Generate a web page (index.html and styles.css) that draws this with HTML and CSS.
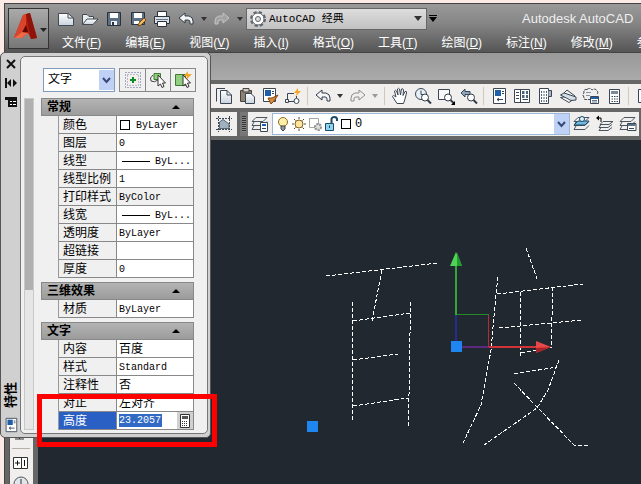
FILE: index.html
```html
<!DOCTYPE html>
<html lang="zh-CN">
<head>
    <meta charset="UTF-8">
    <meta name="viewport" content="width=device-width, initial-scale=1.0">
    <title>Autodesk AutoCAD</title>
    <link rel="stylesheet" href="styles.css">
</head>
<body>
    <svg class="defs" width="0" height="0">
        <defs>
            <linearGradient id="paper" x1="0" y1="0" x2="0" y2="1">
                <stop offset="0" stop-color="#ffffff"/>
                <stop offset="1" stop-color="#c9d3de"/>
            </linearGradient>
            <symbol id="undo" viewBox="0 0 18 18">
                <path d="M2 8 L8 3 V6 H12 Q16 7 16 11 V14 H13 V12 Q13 10 11 10 H8 V13 Z" stroke="#333c48"/>
            </symbol>
            <symbol id="redo" viewBox="0 0 18 18">
                <path d="M16 8 L10 3 V6 H6 Q2 7 2 11 V14 H5 V12 Q5 10 7 10 H10 V13 Z" stroke="currentColor"/>
            </symbol>
            <symbol id="properties" viewBox="0 0 18 18">
                <path d="M3.500 1.500 H15.500 V16.500 H3.500 Z" fill="#fff" stroke="#3b4654"/>
                <path d="M5 3 H11 V9 H5 Z" fill="#1e5fa8"/>
                <path d="M12 4.500 H14 M12 6.500 H14 M7 12.500 H13 M7 12.500 L9 11 M7 12.500 L9 14" stroke="#3b4654" fill="none"/>
            </symbol>
            <symbol id="layers" viewBox="0 0 18 18">
                <path d="M5 2.500 H16 L12 6.500 H1 Z M3 7 L1 10.500 H12 L16 6.500 M3 11 L1 14.500 H12 L16 10.500" stroke="#4a5562"/>
            </symbol>
            <symbol id="lens" viewBox="0 0 18 18">
                <circle cx="11" cy="10.500" r="3.500" fill="#fff" stroke="#333c48"/>
                <path d="M13.500 13 L17 16.500" stroke="#333c48" stroke-width="2"/>
            </symbol>
            <symbol id="cursor" viewBox="0 0 18 18">
                <path d="M9 4 V15 L11.500 13 L13 16.500 L15 15.500 L13.500 12 H16.500 Z" fill="#fff" stroke="#333"/>
            </symbol>
        </defs>
    </svg>

    <div class="app">
        <header class="titlebar">
            <button class="app-menu" aria-label="应用程序菜单">
                <svg width="38" height="38" viewBox="0 0 38 38">
                    <path d="M4 28 L13 5 L20 3 L27 28 L21 29 L18 23 L12 28 Z" fill="#b81f10"/>
                    <path d="M13 5 L16 4 L16 15 L12 22 L4 28 Z" fill="#d8452c"/>
                    <path d="M16 4 L20 3 L27 28 L21 29 L19 20 Z" fill="#8e130b"/>
                    <path d="M12 23 L16 15 L18 22 Z" fill="#5c0904"/>
                    <path d="M4 28 L12 22 L18 23 L12 28 Z" fill="#ef6b45"/>
                    <path d="M30 18 H37 L33.500 22 Z" fill="#222"/>
                </svg>
            </button>
            <div class="titlebar-rows">
                <div class="quick-access">
                    <button aria-label="新建"><svg viewBox="0 0 18 18"><path d="M1.500 3.500 H11 L16.500 8 V15.500 H1.500 Z" fill="url(#paper)" stroke="#434a52"/><path d="M11 3.500 V8 H16.500" stroke="#434a52"/></svg></button>
                    <button aria-label="打开"><svg viewBox="0 0 18 18"><path d="M1.500 14.500 V4.500 H6 L8 6.500 H12.500 V9" fill="#e8edf2" stroke="#434a52"/><path d="M1.500 14.500 L6 9 H17 L12 14.500 Z" fill="url(#paper)" stroke="#434a52"/></svg></button>
                    <button aria-label="保存"><svg viewBox="0 0 18 18"><path d="M2.500 2.500 H15.500 V15.500 H2.500 Z" fill="#5d6f82" stroke="#29323d"/><path d="M5 3 H13 V8 H5 Z" fill="#fff"/><path d="M6 11 H12 V15 H6 Z" fill="#eef1f5"/><path d="M7 12 H9 V15 H7 Z" fill="#29323d"/></svg></button>
                    <button aria-label="另存为"><svg viewBox="0 0 18 18"><path d="M2.500 2.500 H15.500 V14.500 H2.500 Z" fill="#5d6f82" stroke="#29323d"/><path d="M5 3 H13 V8 H5 Z M5 11 H10 V14 H5 Z" fill="#fff"/><path d="M9 16 L10 13 L15 8 L17 10 L12 15 Z" fill="#f2b95e" stroke="#7c4a13"/></svg></button>
                    <button aria-label="打印"><svg viewBox="0 0 18 18"><path d="M4.500 7 V1.500 H13.500 V7" fill="#fff" stroke="#29323d"/><path d="M1.500 6.500 H16.500 V13.500 H1.500 Z" fill="#dbe1e8" stroke="#29323d"/><path d="M4.500 11.500 H13.500 V16.500 H4.500 Z" fill="#fff" stroke="#29323d"/><path d="M3 9.500 H15" stroke="#6b7784"/></svg></button>
                    <button aria-label="放弃" class="fill-light"><svg><use href="#undo"/></svg></button>
                    <button class="caret" aria-label="放弃列表"></button>
                    <button aria-label="重做" class="redo-dim"><svg><use href="#redo"/></svg></button>
                    <button class="caret" aria-label="重做列表"></button>
                    <div class="workspace">
                        <svg viewBox="0 0 18 18">
                            <circle cx="9" cy="9" r="6.500" stroke="#5f666e" stroke-width="3" stroke-dasharray="3 2.100"/>
                            <circle cx="9" cy="9" r="6" fill="#fff" stroke="#5f666e"/>
                            <circle cx="9" cy="9" r="2.500" fill="#ddd" stroke="#5f666e"/>
                        </svg>
                        <select aria-label="工作空间"><option>AutoCAD 经典</option></select>
                    </div>
                    <button class="caret customize" aria-label="自定义快速访问工具栏"></button>
                    <span class="app-title">Autodesk AutoCAD</span>
                </div>
                <nav class="menubar">
                    <a href="#">文件(<u>F</u>)</a>
                    <a href="#">编辑(<u>E</u>)</a>
                    <a href="#">视图(<u>V</u>)</a>
                    <a href="#">插入(<u>I</u>)</a>
                    <a href="#">格式(<u>O</u>)</a>
                    <a href="#">工具(<u>T</u>)</a>
                    <a href="#">绘图(<u>D</u>)</a>
                    <a href="#">标注(<u>N</u>)</a>
                    <a href="#">修改(<u>M</u>)</a>
                    <a href="#">参数(<u>P</u>)</a>
                </nav>
            </div>
        </header>

        <div class="ribbon"></div>

        <div class="toolbar standard">
            <button aria-label="复制"><svg viewBox="0 0 18 18"><path d="M1.500 14.500 V1.500 H10" stroke="#3b4654"/><path d="M5.500 3.500 H12 L16.500 8 V16.500 H5.500 Z" fill="url(#paper)" stroke="#3b4654"/><path d="M12 3.500 V8 H16.500" stroke="#3b4654"/></svg></button>
            <button aria-label="粘贴"><svg viewBox="0 0 18 18"><path d="M2.500 3.500 H13.500 V14.500 H2.500 Z" fill="#8b8273" stroke="#4b443a"/><path d="M5 1.500 H11 V5 H5 Z" fill="#ccc" stroke="#4b443a"/><path d="M7.500 6.500 H13 L16.500 10 V16.500 H7.500 Z" fill="url(#paper)" stroke="#3b4654"/></svg></button>
            <button aria-label="特性匹配"><svg viewBox="0 0 18 18"><path d="M2.500 1.500 H14.500 V14.500 H2.500 Z" fill="#fff" stroke="#3b4654"/><path d="M4 3 H10 V9 H4 Z" fill="#1e5fa8"/><path d="M11 4.500 H13 M11 6.500 H13" stroke="#3b4654"/><path d="M7 11 L11 11 L17 8 L13 14 L10 17 Z" fill="#d98a35" stroke="#7c4213"/></svg></button>
            <button aria-label="块编辑器"><svg viewBox="0 0 18 18"><path d="M3.500 6.500 H10 M3.500 6.500 V12 M1.500 12.500 H4.500 V15.500 H1.500 Z M5 14.500 H10" stroke="#3b4654"/><circle cx="12.500" cy="14" r="2.500" fill="#fff" stroke="#3b4654"/><path d="M12.500 11 V9" stroke="#3b4654"/><path d="M14 1 L10 6 H13 L11 10 L17 4 H14 Z" fill="#f5a623"/></svg></button>
            <span class="separator"></span>
            <button aria-label="放弃" class="fill-light"><svg><use href="#undo"/></svg></button>
            <button class="caret" aria-label="放弃列表"></button>
            <button aria-label="重做" class="redo"><svg><use href="#redo"/></svg></button>
            <button class="caret dim" aria-label="重做列表"></button>
            <span class="separator"></span>
            <button aria-label="实时平移"><svg viewBox="0 0 18 18"><path d="M6 16.500 L1.500 9.500 Q2 7.500 5 10 L3.500 4 Q4.500 2.500 5.500 4 L7 8 L6.500 2 Q7.500 .500 8.500 2 L9.500 8 L10.500 2 Q12 1 12.500 3 L12 8.500 L14 4.500 Q16 4 15.500 6 L14 12 L12.500 16.500 Z" fill="#fff" stroke="#3b4654"/></svg></button>
            <button aria-label="实时缩放"><svg viewBox="0 0 18 18"><circle cx="7" cy="7" r="5.500" fill="#e8f0f7" stroke="#3b4654"/><path d="M7 3.500 V7.500 H10" stroke="#3b4654"/><use href="#lens"/></svg></button>
            <button aria-label="窗口缩放"><svg viewBox="0 0 18 18"><path d="M1.500 2.500 H12.500 V12.500 H1.500 Z" fill="#f8f8f8" stroke="#3b4654"/><use href="#lens"/><path d="M18 14 V18 H14 Z" fill="#000"/></svg></button>
            <button aria-label="缩放上一个"><svg viewBox="0 0 18 18"><path d="M1 6 L5 2 V4.500 H10 V7.500 H5 V10 Z" fill="#8aa5bd" stroke="#3b4654"/><use href="#lens"/></svg></button>
            <span class="separator"></span>
            <button aria-label="特性"><svg><use href="#properties"/></svg></button>
            <button aria-label="设计中心"><svg viewBox="0 0 18 18"><path d="M1.500 2.500 H16.500 V15.500 H1.500 Z M7.500 2.500 V15.500" fill="#fff" stroke="#3b4654"/><path d="M3 5.500 H6 M3 8.500 H6 M3 11.500 H6" stroke="#3b4654"/><path d="M9 4 H11.500 V7 H9 Z M13 4 H15 V7 H13 Z M9 8 H11.500 V11 H9 Z M13 8 H15 V11 H13 Z" fill="#4d6478"/><path d="M9.500 12.500 H15" stroke="#3b4654"/></svg></button>
            <button aria-label="工具选项板"><svg viewBox="0 0 18 18"><path d="M3.500 1.500 H12.500 V16.500 H3.500 Z" fill="#fff" stroke="#3b4654"/><path d="M12.500 3.500 H15.500 V9.500 H12.500" fill="#aab5c0" stroke="#3b4654"/><path d="M5.500 4 V15 M8 4 V15 M10.500 4 V15" stroke="#4d6478" stroke-dasharray="2 1"/></svg></button>
            <button aria-label="图纸集"><svg viewBox="0 0 18 18"><path d="M1.500 10.500 L8 9.500 L16 11 L10 15.500 Z" fill="#fff" stroke="#3b4654"/><path d="M1.500 8 L5 6 L17 10 V13 L12 13.500 Z" fill="#d5dee6" stroke="#3b4654"/><path d="M5 6 L8 3 L16 9" stroke="#3b4654"/></svg></button>
            <button aria-label="标记集"><svg viewBox="0 0 18 18"><path d="M5 2.500 Q1 2 2 6 Q0 8 2 10 Q1 13 5 12.500 H8 M5 2.500 Q8 0 10 3 Q13 1 14 3 Q17 4 15 8" stroke="#3b4654" stroke-dasharray="3 1"/><path d="M4 5.500 H9 M4 8.500 H8" stroke="#8795a3"/><path d="M8.500 9.500 H16.500 V16.500 H8.500 Z" fill="#fff" stroke="#3b4654"/><path d="M9 10 H16 V12 H9 Z" fill="#1e5fa8"/><path d="M10 13.500 H15 M10 15 H15" stroke="#6b7784"/></svg></button>
            <button aria-label="快速计算器"><svg viewBox="0 0 18 18"><path d="M4.500 2.500 H14.500 V16.500 H4.500 Z" fill="#fff" stroke="#3b4654"/><path d="M6 4 H13 V7 H6 Z" fill="#7c8a98"/><path d="M6.500 9.500 H13 M6.500 12 H13 M6.500 14.500 H13" stroke="#3b4654" stroke-dasharray="1.500 1"/></svg></button>
            <span class="separator"></span>
            <button aria-label="帮助"><svg viewBox="0 0 18 18"><path d="M3.500 2.500 H16 V15.500 H3.500 Z" fill="#fff" stroke="#3b4654"/></svg></button>
        </div>

        <div class="layer-row">
            <div class="toolbar isolate">
                <button aria-label="隔离"><svg viewBox="0 0 18 18"><path d="M3.500 1 V17 M14.500 1 V17 M1 3.500 H17 M1 14.500 H17" stroke="#3b4654" stroke-dasharray="2 1"/><path d="M4.500 13.500 V7 L8 4.500 L14 9 V13.500 Z" fill="#9fb0bf" stroke="#59656f"/></svg></button>
            </div>
            <div class="toolbar layers">
                <span class="grip"></span>
                <button aria-label="图层特性管理器"><svg viewBox="0 0 18 18"><use href="#layers"/><path d="M9.500 7.500 H16.500 V16.500 H9.500 Z" fill="#fff" stroke="#3b4654"/><path d="M11 9 H15 V11 H11 Z" fill="#1e5fa8"/><path d="M11 13.500 H15" stroke="#3b4654"/></svg></button>
                <div class="layer-combo">
                    <svg viewBox="0 0 16 18"><circle cx="8" cy="7" r="4.500" fill="#fff0a8" stroke="#8b6a20"/><path d="M6 11 H10 V14 L8 16 L6 14 Z" fill="#8d98a3" stroke="#444"/></svg>
                    <svg viewBox="0 0 16 18"><circle cx="8" cy="9" r="4" fill="#ffe7a0" stroke="#7b6226"/><path d="M8 2 V4 M8 14 V16 M1 9 H3 M13 9 H15 M3 4 L4.500 5.500 M13 4 L11.500 5.500 M3 14 L4.500 12.500 M13 14 L11.500 12.500" stroke="#5c4b20"/></svg>
                    <svg viewBox="0 0 16 18"><path d="M2 3.500 H11.500 V10 M2.500 3 V12.500 H8" stroke="#a5a5a5"/><circle cx="11" cy="12" r="3" fill="#ddd" stroke="#8f8f8f" stroke-width="2" stroke-dasharray="2 1"/></svg>
                    <svg viewBox="0 0 16 18"><path d="M2.500 8.500 H10.500 V15.500 H2.500 Z" fill="#8fd3ee" stroke="#1b4a66"/><path d="M6.500 10.500 V13" stroke="#1b4a66"/><path d="M8.500 8 V4 Q9 2 11.500 2 Q14 2 14 4.500 V6" stroke="#1b4a66" stroke-width="2"/></svg>
                    <span class="swatch"></span>
                    <select aria-label="图层"><option>0</option></select>
                </div>
                <button aria-label="置为当前"><svg viewBox="0 0 18 18"><use href="#layers"/><path d="M5 6 H16 L12 10 H1 Z" fill="#74b8e0" stroke="#1b4a66"/><circle cx="9" cy="4" r="2.500" fill="#e3f2fb" stroke="#1b4a66"/></svg></button>
                <button aria-label="上一个图层"><svg viewBox="0 0 18 18"><path d="M7 6.500 H17 L13 9.500 H4 Z M5 9.500 L3 12.500 H12 L16 9.500 M5 12.500 L3 15.500 H12 L16 12.500" stroke="#4a5562"/><path d="M0 3 L3 .500 V5.500 Z" fill="#000"/><path d="M2 3 H5 V7" stroke="#000"/></svg></button>
                <button aria-label="图层状态"><svg viewBox="0 0 18 18"><use href="#layers"/><path d="M8.500 8.500 H17 V15.500 H8.500 Z" fill="#fff" stroke="#3b4654"/><path d="M9 9 H16.500 V11 H9 Z" fill="#5f7386"/><path d="M10 13.500 H15" stroke="#3b4654"/></svg></button>
            </div>
        </div>

        <div class="workarea">
            <div class="side-toolbar">
                <svg width="22" height="54" viewBox="0 0 22 54">
                    <path d="M5 9 H14 M9.500 3 V9 M7 6 H12" stroke="#333"/>
                    <path d="M2 18.500 H20" stroke="#b5b1a5"/>
                    <path d="M3.500 27.500 H17.500 V38.500 H3.500 Z M11.500 28 V38" fill="#fff" stroke="#333"/>
                    <path d="M5 33 H10 M7.500 30.500 V35.500 M14.500 30 V36" stroke="#111"/>
                    <circle cx="11" cy="54" r="7" fill="#dfe5ea" stroke="#555"/>
                    <path d="M11 49 V54" stroke="#333"/>
                </svg>
            </div>
            <main class="canvas">
                <svg width="603" height="344" viewBox="38 140 603 344">
                    <!-- 百 -->
                    <g class="sketch">
                        <path d="M326 276 L438 263"/>
                        <path d="M382 270 L372 321"/>
                        <path d="M352.500 302 V420"/>
                        <path d="M410.500 302 L408.500 426"/>
                        <path d="M353 321 L410 313"/>
                        <path d="M353 360 L398 354"/>
                        <path d="M353 406 L408 398"/>
                    </g>
                    <!-- 度 -->
                    <g class="sketch">
                        <path d="M526 248 L537 279"/>
                        <path d="M498 277 L496 294 L491 350 L481 405 L463 443"/>
                        <path d="M497 294 L583 284"/>
                        <path d="M499 328 L582 320"/>
                        <path d="M520.500 292 V357"/>
                        <path d="M553 287 L551 348"/>
                        <path d="M521 353 L552 347"/>
                        <path d="M514 374 L557 367"/>
                        <path d="M559 360 L548 390 L537 408 L484 445"/>
                        <path d="M514 383 L537 407 L574 445 H588"/>
                    </g>
                    <!-- UCS axes -->
                    <g fill="none" stroke-width="2">
                        <path d="M456 266 V315" stroke="#35a63b"/>
                        <path d="M456 315 V347" stroke="#262b8f"/>
                        <path d="M456 347 H489" stroke="#5b2a80"/>
                        <path d="M489 347 H537" stroke="#d23336"/>
                        <path d="M457 314.500 H489" stroke="#218a2b" stroke-width="1"/>
                        <path d="M488.500 315 V347" stroke="#b52d33" stroke-width="1"/>
                    </g>
                    <path d="M456 252 L462 266 H450 Z" fill="#4fd455"/>
                    <path d="M457 252 L462 266 H457 Z" fill="#259a30"/>
                    <path d="M551 347 L536 341 V353 Z" fill="#e8484a"/>
                    <path d="M551 347 L536 348 V353 Z" fill="#a82428"/>
                    <path d="M451 341 H462 V352 H451 Z M307 421 H318 V432 H307 Z" fill="#1e86ee"/>
                </svg>
            </main>
        </div>
    </div>

    <aside class="palette">
        <div class="palette-strip">
            <button aria-label="关闭"><svg width="14" height="14" viewBox="0 0 14 14"><path d="M3 3 L11 11 M11 3 L3 11" stroke="#111" stroke-width="2"/></svg></button>
            <button aria-label="自动隐藏"><svg width="14" height="14" viewBox="0 0 14 14"><path d="M2 2 V12" stroke="#111" stroke-width="2"/><path d="M3 7 L7 3 V11 Z M13 7 L9 3 V11 Z" fill="#111"/></svg></button>
            <button aria-label="特性菜单"><svg width="14" height="14" viewBox="0 0 14 14"><path d="M1 2 H13 V12 H4 V5 H1 Z" fill="#111"/><path d="M6 6.500 H8 M6 9.500 H8 M9 6.500 H12 M9 9.500 H12" stroke="#fff"/></svg></button>
            <span class="palette-title">特性</span>
            <svg class="palette-logo" width="16" height="18"><use href="#properties"/></svg>
        </div>
        <div class="palette-body">
            <div class="scroll"><div class="scroll-thumb"></div></div>
            <div class="palette-content">
                <div class="object-row">
                    <select aria-label="对象类型"><option>文字</option></select>
                    <div class="pick-buttons">
                        <button aria-label="切换 PICKADD"><svg viewBox="0 0 18 18"><path d="M1.500 1.500 H16.500 V16.500 H1.500 Z" stroke="#5d5da5" stroke-dasharray="1 2"/><path d="M3.500 3.500 H14.500 V14.500 H3.500 Z" stroke="#888" stroke-dasharray="1 2"/><path d="M9 6 V12 M6 9 H12" stroke="#128a20" stroke-width="2"/></svg></button>
                        <button aria-label="选择对象"><svg viewBox="0 0 18 18"><path d="M5 2.500 H11.500 V8.500 H5 Z" fill="#8fcf7d" stroke="#3f7d35"/><path d="M4 4 Q0 7 2 10 Q5 12 9 9" stroke="#444"/><use href="#cursor"/></svg></button>
                        <button aria-label="快速选择"><svg viewBox="0 0 18 18"><path d="M1.500 3.500 H11.500 V14.500 H1.500 Z" fill="#8fcf7d" stroke="#3f7d35"/><path d="M14 0 L10 5 H13 L12 9 L18 3 H14 Z" fill="#f5a623"/><use href="#cursor"/></svg></button>
                    </div>
                </div>

                <section>
                    <h2>常规</h2>
                    <table>
                        <tr><th>颜色</th><td class="latin"><span class="swatch"></span>ByLayer</td></tr>
                        <tr><th>图层</th><td class="latin">0</td></tr>
                        <tr><th>线型</th><td class="latin"><span class="line-sample"></span>ByL...</td></tr>
                        <tr><th>线型比例</th><td class="latin">1</td></tr>
                        <tr class="readonly"><th>打印样式</th><td class="latin">ByColor</td></tr>
                        <tr><th>线宽</th><td class="latin"><span class="line-sample"></span>ByL...</td></tr>
                        <tr><th>透明度</th><td class="latin">ByLayer</td></tr>
                        <tr><th>超链接</th><td></td></tr>
                        <tr><th>厚度</th><td class="latin">0</td></tr>
                    </table>
                </section>

                <section>
                    <h2>三维效果</h2>
                    <table>
                        <tr><th>材质</th><td class="latin">ByLayer</td></tr>
                    </table>
                </section>

                <section>
                    <h2>文字</h2>
                    <table>
                        <tr><th>内容</th><td>百度</td></tr>
                        <tr><th>样式</th><td class="latin">Standard</td></tr>
                        <tr><th>注释性</th><td>否</td></tr>
                        <tr><th>对正</th><td>左对齐</td></tr>
                        <tr class="selected">
                            <th><label for="textHeight">高度</label></th>
                            <td>
                                <div class="height-field">
                                    <input type="text" id="textHeight" value="23.2057">
                                    <button aria-label="计算器"><svg width="14" height="16" viewBox="0 0 14 16"><path d="M2.500 1.500 H11.500 V14.500 H2.500 Z" fill="#fff" stroke="#333"/><path d="M4 3 H10 V6 H4 Z" fill="#555"/><path d="M4 8.500 H10 M4 10.500 H10 M4 12.500 H10" stroke="#333" stroke-dasharray="1 1"/></svg></button>
                                </div>
                            </td>
                        </tr>
                    </table>
                </section>
            </div>
        </div>
    </aside>

    <div class="highlight"></div>
</body>
</html>
```
FILE: styles.css
```css
* {
    box-sizing: border-box;
}

body {
    margin: 0;
    height: 100vh;
    padding: 3px 0 0 4px;
    overflow: hidden;
    position: relative;
    background-color: #fbeae5;
    font-family: "Liberation Sans", "Noto Sans CJK SC", sans-serif;
    font-size: 12px;
    color: #000;
}

button {
    display: flex;
    align-items: center;
    justify-content: center;
    padding: 0;
    border: none;
    background: none;
    flex: none;
}

svg {
    display: block;
    fill: none;
    flex: none;
}

select {
    appearance: none;
    border: none;
    border-radius: 0;
    outline: none;
    padding: 0 2px;
    color: #000;
    background: none;
    font-family: "Liberation Mono", "Noto Sans CJK SC", monospace;
    font-size: 12px;
}

.defs {
    position: absolute;
}

.app {
    height: 100%;
    display: flex;
    flex-direction: column;
    background-color: #666;
    border-left: 1px solid #444;
}

/* title bar */
.titlebar {
    display: flex;
    flex: none;
    height: 50px;
    padding: 4px 0 0 3px;
    overflow: hidden;
    border-top: 1px solid #444;
    border-bottom: 1px solid #444;
    background: linear-gradient(#999, #868686 40%, #555);
}

.app-menu {
    width: 41px;
    height: 41px;
    border: 1px solid #333;
    background: linear-gradient(#aaa, #777);
}

.titlebar-rows {
    flex: 1;
    min-width: 0;
    padding-left: 5px;
}

.quick-access {
    display: flex;
    align-items: center;
    height: 21px;
}

.quick-access > button {
    width: 24px;
}

.quick-access button svg,
.toolbar button svg,
.pick-buttons svg {
    width: 18px;
    height: 18px;
}

.fill-light svg {
    fill: #f3f5f7;
}

.redo svg {
    color: #8b8e92;
}

.redo-dim svg {
    fill: #a2a2a2;
    color: #c4c4c4;
}

.quick-access .caret,
.toolbar .caret {
    width: 12px;
}

.caret::after {
    content: "";
    border: 3px solid transparent;
    border-top: 4px solid #333;
    border-bottom: none;
}

.caret.dim::after {
    border-top-color: #999;
}

.customize {
    flex-direction: column;
    gap: 1px;
}

.customize::before {
    content: "";
    width: 8px;
    height: 1px;
    background-color: #000;
}

.customize::after {
    border-width: 5px 4px 0;
    border-top-color: #000;
}

.workspace {
    display: flex;
    align-items: center;
    flex: none;
    width: 181px;
    height: 22px;
    padding: 0 2px;
    border: 1px solid #666;
    background: linear-gradient(#ddd, #c2c2c2);
}

.workspace svg {
    width: 18px;
    height: 18px;
}

.workspace select {
    flex: 1;
    font-size: 11px;
}

.workspace::after {
    content: "";
    margin-right: 2px;
    border: 4px solid transparent;
    border-top: 5px solid #333;
    border-bottom: none;
}

.app-title {
    margin-left: 83px;
    color: #eee;
    font-size: 13px;
    white-space: nowrap;
}

.menubar {
    display: flex;
    gap: 24px;
    margin-top: 5px;
    padding-left: 8px;
}

.menubar a {
    color: #fff;
    line-height: 18px;
    text-decoration: none;
    white-space: nowrap;
}

.ribbon {
    flex: none;
    height: 27px;
    background: linear-gradient(#999, #aaa);
}

/* toolbars */
.toolbar {
    display: flex;
    align-items: center;
    height: 24px;
    background-color: #f0efee;
}

.toolbar button {
    width: 23px;
}

.standard {
    flex: none;
    margin: 4px 0 4px 206px;
    padding-left: 1px;
}

.separator {
    flex: none;
    width: 7px;
    height: 18px;
    background: linear-gradient(#cdc9b8, #cdc9b8) center / 1px 100% no-repeat;
}

.layer-row {
    display: flex;
    flex: none;
    gap: 3px;
    margin: 0 2px 4px 206px;
}

.isolate {
    width: 26px;
    justify-content: center;
}

.layers {
    flex: 1;
}

.grip {
    width: 8px;
    height: 24px;
    border: 3px solid #777;
    border-width: 4px 2px;
    background: repeating-linear-gradient(#333 0 1px, #888 1px 2px);
}

.layer-combo {
    display: flex;
    align-items: center;
    flex: 1;
    height: 22px;
    margin-left: 1px;
    padding-left: 2px;
    border: 1px solid #9cb6d8;
    background-color: #fff;
}

.layer-combo svg {
    width: 16px;
    height: 18px;
}

.swatch {
    display: inline-block;
    flex: none;
    width: 10px;
    height: 10px;
    margin: 0 6px 0 1px;
    border: 1px solid #000;
    background-color: #fff;
    vertical-align: middle;
}

.layer-combo .swatch {
    margin: 0 2px;
}

.layer-combo select,
.object-row select {
    flex: 1;
    align-self: stretch;
    background: url("data:image/svg+xml,%3Csvg xmlns='http://www.w3.org/2000/svg' width='15' height='20' viewBox='0 0 15 20'%3E%3Cpath d='M0 0 H15 V20 H0 Z' fill='%23bfd1f5'/%3E%3Cpath d='M4 8 L7.500 12 L11 8' fill='none' stroke='%23354a7a' stroke-width='2'/%3E%3C/svg%3E") right center no-repeat;
}

/* drawing area */
.workarea {
    display: flex;
    flex: 1;
    min-height: 0;
    padding-left: 4px;
}

.side-toolbar {
    display: flex;
    align-items: flex-end;
    flex: none;
    width: 24px;
    border-left: 1px solid #555;
    background-color: #f0efee;
}

.canvas {
    flex: 1;
    min-width: 0;
    margin-left: 5px;
    overflow: hidden;
    background-color: #212830;
}

.sketch {
    fill: none;
    stroke: #fff;
    stroke-dasharray: 4 2;
    shape-rendering: crispEdges;
}

/* properties palette, floats over the window */
.palette {
    position: absolute;
    top: 52px;
    left: 0;
    display: flex;
    width: 211px;
    padding: 3px 2px 3px 1px;
    border: 1px solid #555;
    border-radius: 5px;
    background-color: #d0d0d0;
}

.palette-strip {
    display: flex;
    flex-direction: column;
    align-items: center;
    flex: none;
    gap: 4px;
    width: 18px;
}

.palette-strip > button {
    height: 15px;
}

.palette-title {
    margin-top: auto;
    margin-bottom: 4px;
    font-weight: bold;
    font-size: 13px;
    line-height: 18px;
    writing-mode: vertical-rl;
    text-orientation: sideways;
    transform: rotate(180deg);
}

.palette-body {
    display: flex;
    flex: 1;
    min-width: 0;
    padding: 11px 13px 3px 3px;
    border: 1px solid #777;
    border-radius: 5px;
    background-color: #f0f0f0;
}

.scroll {
    flex: none;
    width: 10px;
    margin-top: 30px;
    border: 1px solid #c8c8c8;
    background-color: #e6e6e6;
}

.scroll-thumb {
    height: 58%;
    background-color: #b0b0b0;
}

.palette-content {
    flex: 1;
    min-width: 0;
    padding-left: 7px;
}

.object-row {
    display: flex;
    gap: 4px;
    height: 24px;
    margin: 0 -2px 6px 2px;
}

.object-row select {
    padding-left: 4px;
    border: 1px solid #7f9db9;
    background-color: #fff;
}

.pick-buttons {
    display: flex;
    border: 1px solid #888;
}

.pick-buttons button {
    width: 25px;
}

.pick-buttons button:nth-child(n+2) {
    border-left: 1px solid #888;
}

.palette section + section {
    margin-top: 4px;
}

.palette h2 {
    display: flex;
    align-items: center;
    justify-content: space-between;
    height: 18px;
    margin: 0;
    padding: 0 13px 0 5px;
    border: 1px solid #888;
    background: linear-gradient(#b4b4b4, #9c9c9c);
    font-size: 12px;
    line-height: 16px;
}

.palette h2::after {
    content: "";
    border: 4px solid transparent;
    border-bottom: 4px solid #000;
    border-top: none;
}

.palette table {
    width: calc(100% - 17px);
    margin-left: 17px;
    border-spacing: 0;
    table-layout: fixed;
    background-color: #fff;
    border-left: 1px solid #999;
}

.palette th,
.palette td {
    height: 18px;
    padding: 0 0 0 2px;
    overflow: hidden;
    border-right: 1px solid #888;
    border-bottom: 1px solid #888;
    font-weight: normal;
    line-height: 16px;
    text-align: left;
    white-space: nowrap;
}

.palette th {
    width: 58px;
    padding-left: 4px;
    background-color: #f0f0f0;
}

.palette .latin {
    padding-top: 3px;
    font-family: "Liberation Mono", monospace;
    font-size: 10px;
    line-height: 14px;
}

.readonly td {
    background-color: #f0f0f0;
}

.line-sample {
    display: inline-block;
    width: 28px;
    height: 1px;
    margin: 0 5px 0 3px;
    background-color: #000;
    vertical-align: middle;
}

.palette .selected th {
    background-color: #2a5fc4;
    color: #fff;
}

.height-field {
    display: flex;
    align-items: center;
    justify-content: space-between;
}

.height-field input {
    width: 43px;
    height: 13px;
    padding: 0;
    border: none;
    outline: none;
    background-color: #316ac5;
    color: #fff;
    font-family: "Liberation Mono", monospace;
    font-size: 10px;
}

.height-field button {
    width: 16px;
    height: 17px;
    background-color: #d0d0d0;
}

/* callout around the height row */
.highlight {
    position: absolute;
    top: 394px;
    left: 37px;
    width: 180px;
    height: 53px;
    border: 5px solid #f00;
}
```
